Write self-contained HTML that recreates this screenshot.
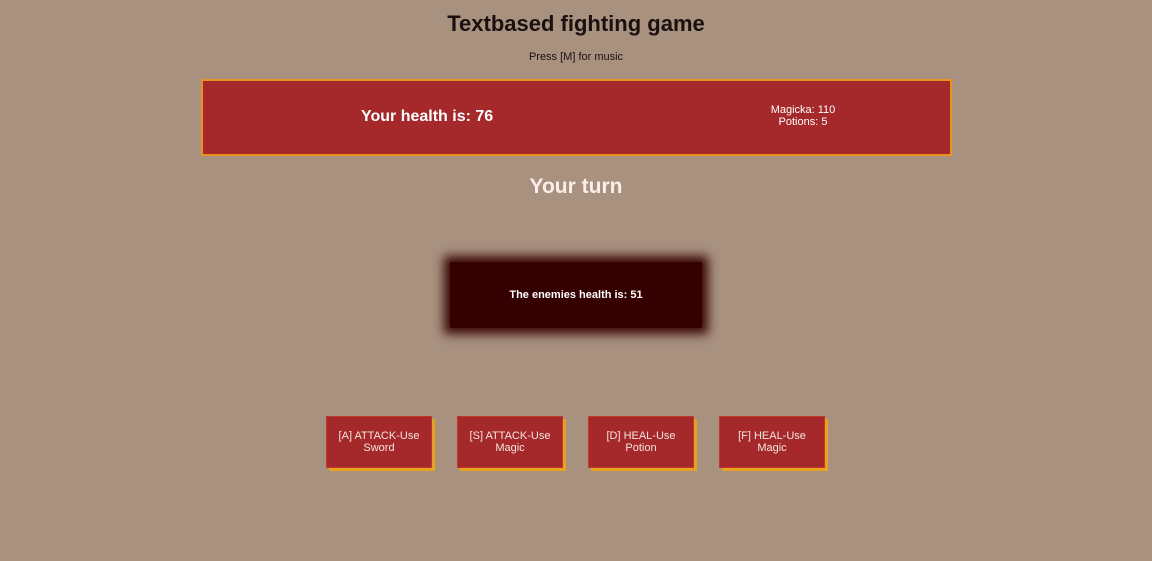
<!DOCTYPE html>
<html><head><style>
body{margin:0;width:1152px;height:561px;background:#a8917f;font-family:"Liberation Sans",sans-serif;position:relative;overflow:hidden;color:#fff}
.a{position:absolute}
h1{position:absolute;top:11px;left:0;width:1152px;text-align:center;margin:0;font-size:22px;color:#1a1010;font-weight:bold}
.sub{top:51px;left:0;width:1152px;text-align:center;font-size:11px;color:#1a1010}
.bar{left:201px;top:79px;width:747px;height:73px;background:#a5282a;border:2px solid #e8931f}
.btn{top:416px;width:106px;height:52px;background:#a5282a;box-shadow:3px 3px 0 #e8a21f;border:1px solid #c0382a;box-sizing:border-box;font-size:11px;text-align:center;display:flex;align-items:center;justify-content:center;line-height:12px;color:#f3e6e0}
</style></head><body>
<h1>Textbased fighting game</h1>
<div class="a sub">Press [M] for music</div>
<div class="a bar">
<div class="a" style="left:158px;top:27px;font-size:16px;font-weight:bold">Your health is: 76</div>
<div class="a" style="left:560px;top:23px;width:80px;text-align:center;font-size:11px;line-height:12px">Magicka: 110<br>Potions: 5</div>
</div>
<div class="a" style="top:175px;left:0;width:1152px;text-align:center;font-size:21px;font-weight:bold;color:#fbeeea">Your turn</div>
<div class="a" style="left:450px;top:262px;width:252px;height:66px;background:#340000;box-shadow:0 0 10px 6px #3a0606;font-size:11px;font-weight:bold;display:flex;align-items:center;justify-content:center">The enemies health is: 51</div>
<div class="a btn" style="left:326px">[A] ATTACK-Use<br>Sword</div>
<div class="a btn" style="left:457px">[S] ATTACK-Use<br>Magic</div>
<div class="a btn" style="left:588px">[D] HEAL-Use<br>Potion</div>
<div class="a btn" style="left:719px">[F] HEAL-Use<br>Magic</div>
</body></html>
